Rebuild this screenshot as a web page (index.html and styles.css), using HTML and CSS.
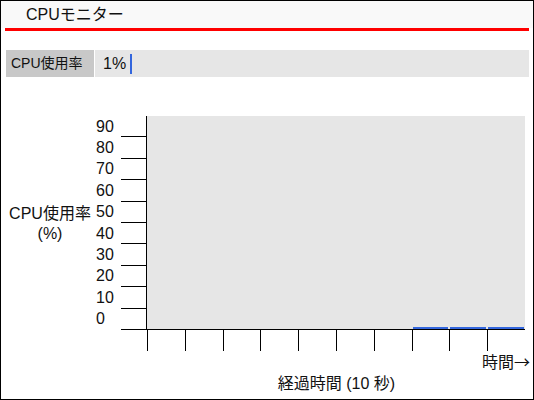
FILE: index.html
```
<!DOCTYPE html>
<html lang="ja">
<head>
<meta charset="utf-8">
<title>CPUモニター</title>
<link rel="stylesheet" href="styles.css">
</head>
<body>
<div class="app">
  <header class="titlebar">CPUモニター</header>
  <div class="redline"></div>
  <div class="usage">
    <div class="usage-label">CPU使用率</div>
    <div class="usage-value"><span class="pct">1%</span><span class="meter"></span></div>
  </div>
  <div class="chart">
    <div class="ytitle">CPU使用率<br>(%)</div>
    <div class="ylabels">
      <div>90</div><div>80</div><div>70</div><div>60</div><div>50</div>
      <div>40</div><div>30</div><div>20</div><div>10</div><div>0</div>
    </div>
    <div class="yticks">
      <div></div><div></div><div></div><div></div><div></div>
      <div></div><div></div><div></div><div></div><div></div>
    </div>
    <div class="plot">
      <div class="col"></div><div class="col"></div><div class="col"></div>
      <div class="col"></div><div class="col"></div><div class="col"></div>
      <div class="col"></div>
      <div class="col"><div class="bar" style="height:1%"></div></div>
      <div class="col"><div class="bar" style="height:1%"></div></div>
      <div class="col"><div class="bar" style="height:1%"></div></div>
    </div>
  </div>
  <div class="xticks">
    <div></div><div></div><div></div><div></div><div></div>
    <div></div><div></div><div></div><div></div><div></div>
  </div>
  <div class="xnote">時間<span class="arrow">→</span></div>
  <div class="xtitle">経過時間 (10 秒)</div>
</div>
</body>
</html>
```
FILE: styles.css
```
html, body {
  margin: 0;
  padding: 0;
  background: #fff;
}
.app {
  width: 534px;
  height: 400px;
  box-sizing: border-box;
  border: 1px solid #000;
  font-family: "Liberation Sans", "Noto Sans CJK JP", sans-serif;
  color: #111;
  overflow: hidden;
}
.titlebar {
  height: 27px;
  line-height: 27px;
  padding-left: 25px;
  font-size: 16px;
  background: #f9f9f9;
}
.redline {
  height: 3px;
  margin: 0 4px;
  background: #ff0000;
}
.usage {
  display: flex;
  height: 27px;
  margin: 19px 4px 0 5px;
}
.usage-label {
  width: 83px;
  padding-left: 5px;
  background: #c8c8c8;
  font-size: 14px;
  line-height: 27px;
}
.usage-value {
  flex: 1;
  margin-left: 1px;
  background: #e6e6e6;
  display: flex;
  align-items: center;
  padding-left: 8px;
}
.pct {
  font-size: 16px;
}
.meter {
  width: 2px;
  height: 20px;
  margin-left: 4px;
  background: #3366dd;
}
.chart {
  display: flex;
  margin-top: 39px;
  height: 214px;
}
.ytitle {
  width: 90px;
  padding-left: 4px;
  align-self: center;
  text-align: center;
  font-size: 16px;
  line-height: 20px;
  padding-top: 1px;
}
.ylabels {
  width: 25px;
  padding-left: 1px;
  display: grid;
  grid-template-rows: repeat(10, 1fr);
  font-size: 16px;
}
.ylabels div {
  display: flex;
  align-items: center;
}
.yticks {
  width: 25px;
  display: grid;
  grid-template-rows: repeat(10, 1fr);
}
.yticks div {
  border-bottom: 1px solid #000;
}
.plot {
  width: 379px;
  box-sizing: border-box;
  border-left: 1px solid #000;
  border-bottom: 1px solid #000;
  background: #e6e6e6;
  display: grid;
  grid-template-columns: repeat(10, 1fr);
  align-items: end;
  height: 100%;
}
.col {
  height: 100%;
  display: flex;
  align-items: flex-end;
  padding: 0 1px;
}
.bar {
  width: 100%;
  background: #3366dd;
}
.xticks {
  display: grid;
  grid-template-columns: repeat(10, 1fr);
  width: 378px;
  height: 21px;
  margin-left: 146px;
}
.xticks div {
  border-left: 1px solid #000;
}
.xnote {
  text-align: right;
  padding-right: 3px;
  font-size: 16px;
  line-height: 20px;
}
.arrow {
  font-family: "Noto Sans CJK JP", sans-serif;
}
.xtitle {
  width: 379px;
  margin: 1px 0 0 146px;
  text-align: center;
  font-size: 16px;
  line-height: 20px;
}
```
